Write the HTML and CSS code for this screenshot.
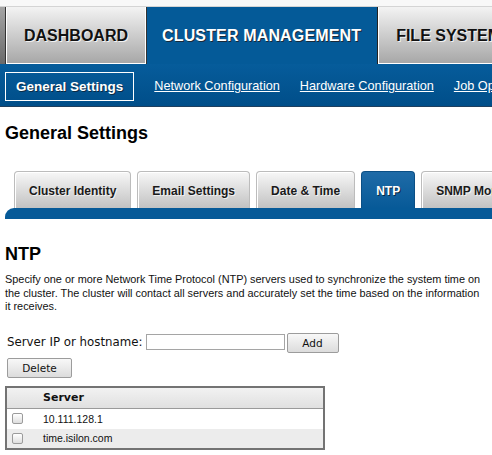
FILE: index.html
```html
<!DOCTYPE html>
<html lang="en">
<head>
<meta charset="utf-8">
<title>General Settings - NTP</title>
<link rel="stylesheet" href="styles.css">
</head>
<body>
<div class="topstrip"></div>
<nav class="mainnav">
  <div class="edge"></div>
  <a class="navtab">DASHBOARD</a>
  <a class="navtab active">CLUSTER MANAGEMENT</a>
  <a class="navtab">FILE SYSTEM</a>
</nav>
<div class="subnav">
  <span class="current">General Settings</span>
  <a class="sublink">Network Configuration</a>
  <a class="sublink">Hardware Configuration</a>
  <a class="sublink">Job Operations</a>
</div>
<main class="content">
  <h1 class="page-title">General Settings</h1>
  <div class="subtabs">
    <span class="subtab">Cluster Identity</span>
    <span class="subtab">Email Settings</span>
    <span class="subtab">Date &amp; Time</span>
    <span class="subtab active">NTP</span>
    <span class="subtab">SNMP Monitoring</span>
  </div>
  <div class="tabbar"></div>
  <section class="panel">
    <h2 class="panel-title">NTP</h2>
    <p class="desc">Specify one or more Network Time Protocol (NTP) servers used to synchronize the system time on<br>the cluster. The cluster will contact all servers and accurately set the time based on the information<br>it receives.</p>
    <div class="form-row">
      <label class="label" for="host">Server IP or hostname:</label>
      <input class="text-input" id="host" type="text">
      <button class="btn btn-add" type="button">Add</button>
    </div>
    <button class="btn btn-delete" type="button">Delete</button>
    <div class="grid">
      <div class="grid-head">
        <span class="cell-check"></span>
        <span class="cell-server">Server</span>
      </div>
      <div class="grid-row">
        <span class="cell-check"><span class="checkbox"></span></span>
        <span class="cell-server">10.111.128.1</span>
      </div>
      <div class="grid-row alt">
        <span class="cell-check"><span class="checkbox"></span></span>
        <span class="cell-server">time.isilon.com</span>
      </div>
    </div>
  </section>
</main>
</body>
</html>
```
FILE: styles.css
```css
html, body {
  margin: 0;
  padding: 0;
  background: #fff;
}
body {
  width: 492px;
  overflow: hidden;
  font-family: "Liberation Sans", Arial, sans-serif;
  color: #000;
}
.topstrip {
  height: 6px;
  background: #f8f8f8;
  border-bottom: 1px solid #d4d4d4;
}
.mainnav {
  display: flex;
  height: 57px;
  background: #045a98;
  overflow: hidden;
  white-space: nowrap;
}
.edge {
  flex: 0 0 5px;
  background: linear-gradient(#a4a4a4, #6a6a6a);
}
.navtab {
  flex: 0 0 auto;
  display: flex;
  align-items: center;
  padding: 0 18px;
  font-weight: bold;
  font-size: 16px;
  color: #111;
  text-shadow: 1px 1px 0 rgba(255,255,255,0.8);
  background: linear-gradient(#f3f3f3, #a6a6a6);
  border-left: 1px solid #333;
  box-shadow: inset 1px 0 0 #fff, inset -1px -1px 0 #fff;
}
.navtab.active {
  background: #045a98;
  color: #fff;
  text-shadow: 1px 1px 0 #1a2a3a;
  box-shadow: none;
  border-left: 1px solid #333;
  padding: 0 16px 0 15px;
  letter-spacing: 0.15px;
}
.navtab.active + .navtab {
  border-left: 1px solid #222;
  padding-left: 18px;
}
.subnav {
  display: flex;
  align-items: flex-start;
  gap: 20px;
  height: 43px;
  padding: 8px 0 0 5px;
  box-sizing: border-box;
  background: linear-gradient(#065c9b, #004e89);
  border-bottom: 1px solid #1e3f5e;
  white-space: nowrap;
  overflow: hidden;
}
.current {
  display: flex;
  align-items: center;
  height: 29px;
  box-sizing: border-box;
  padding: 0 10px;
  border: 1px solid #fff;
  color: #fff;
  font-weight: bold;
  font-size: 13.5px;
  text-shadow: 1px 1px 0 #0b2a44;
}
.sublink {
  color: #fff;
  font-size: 12.7px;
  text-decoration: underline;
  line-height: 29px;
}
.content {
  padding: 0 0 0 5px;
}
.page-title {
  margin: 15px 0 0 0;
  font-size: 18px;
  line-height: 22px;
  font-weight: bold;
}
.subtabs {
  display: flex;
  gap: 6px;
  margin-top: 27px;
  padding-left: 9px;
  height: 37px;
  white-space: nowrap;
  overflow: hidden;
}
.subtab {
  flex: 0 0 auto;
  display: flex;
  align-items: center;
  padding: 2px 14px 0;
  border: 1px solid #bcbcbc;
  border-bottom: none;
  border-radius: 4px 4px 0 0;
  background: linear-gradient(#f7f7f7, #c2c2c2);
  box-shadow: inset 1px 1px 0 #fff;
  font-size: 12px;
  font-weight: bold;
  color: #1a1a1a;
  text-shadow: 1px 1px 0 rgba(255,255,255,0.7);
}
.subtab.active {
  background: linear-gradient(#1f6ba7, #075a98);
  border-color: #0b4f85;
  box-shadow: none;
  color: #fff;
  text-shadow: 1px 1px 0 #0b2a44;
}
.tabbar {
  height: 11px;
  background: #065a98;
  border-radius: 9px 0 0 0;
}
.panel-title {
  margin: 24px 0 0 0;
  font-size: 18px;
  line-height: 22px;
  font-weight: bold;
}
.desc {
  margin: 8px 0 0 0;
  font-size: 10.9px;
  line-height: 13.5px;
  color: #111;
}
.form-row {
  display: flex;
  align-items: flex-start;
  margin-top: 19px;
  padding-left: 2px;
}
.label {
  font-family: "DejaVu Sans", Verdana, sans-serif;
  font-size: 11.8px;
  line-height: 17px;
  margin-top: 1px;
  color: #111;
}
.text-input {
  margin: 1px 0 0 3px;
  width: 139px;
  height: 16px;
  box-sizing: border-box;
  border: 1px solid #a5a5a5;
  padding: 0 2px;
  font-size: 11px;
}
.btn {
  display: block;
  height: 20px;
  box-sizing: border-box;
  padding: 0;
  border: 1px solid #9c9c9c;
  border-radius: 2px;
  background: linear-gradient(#f8f8f8, #dcdcdc);
  font-family: "DejaVu Sans", Verdana, sans-serif;
  font-size: 10.5px;
  color: #111;
}
.btn-add {
  width: 52px;
  margin-left: 2px;
}
.btn-delete {
  width: 65px;
  margin: 5px 0 0 2px;
}
.grid {
  width: 320px;
  box-sizing: border-box;
  margin-top: 8px;
  border: 2px solid #737373;
  font-size: 10.5px;
}
.grid-head, .grid-row {
  display: flex;
  align-items: center;
}
.grid-head {
  height: 20px;
  background: linear-gradient(#f2f2f2, #e0e0e0);
  border-bottom: 1px solid #9a9a9a;
  font-family: "DejaVu Sans", Verdana, sans-serif;
  font-weight: bold;
  font-size: 11px;
}
.grid-row {
  height: 20px;
  background: #fff;
}
.grid-row.alt {
  height: 19px;
  background: #ececec;
}
.cell-check {
  flex: 0 0 36px;
  display: flex;
  align-items: center;
  padding-left: 5px;
  box-sizing: border-box;
}
.checkbox {
  width: 11px;
  height: 11px;
  box-sizing: border-box;
  border: 1px solid #9b9b9b;
  border-radius: 2px;
  background: linear-gradient(#ffffff, #dedede);
}
.cell-server {
  color: #111;
}
```
